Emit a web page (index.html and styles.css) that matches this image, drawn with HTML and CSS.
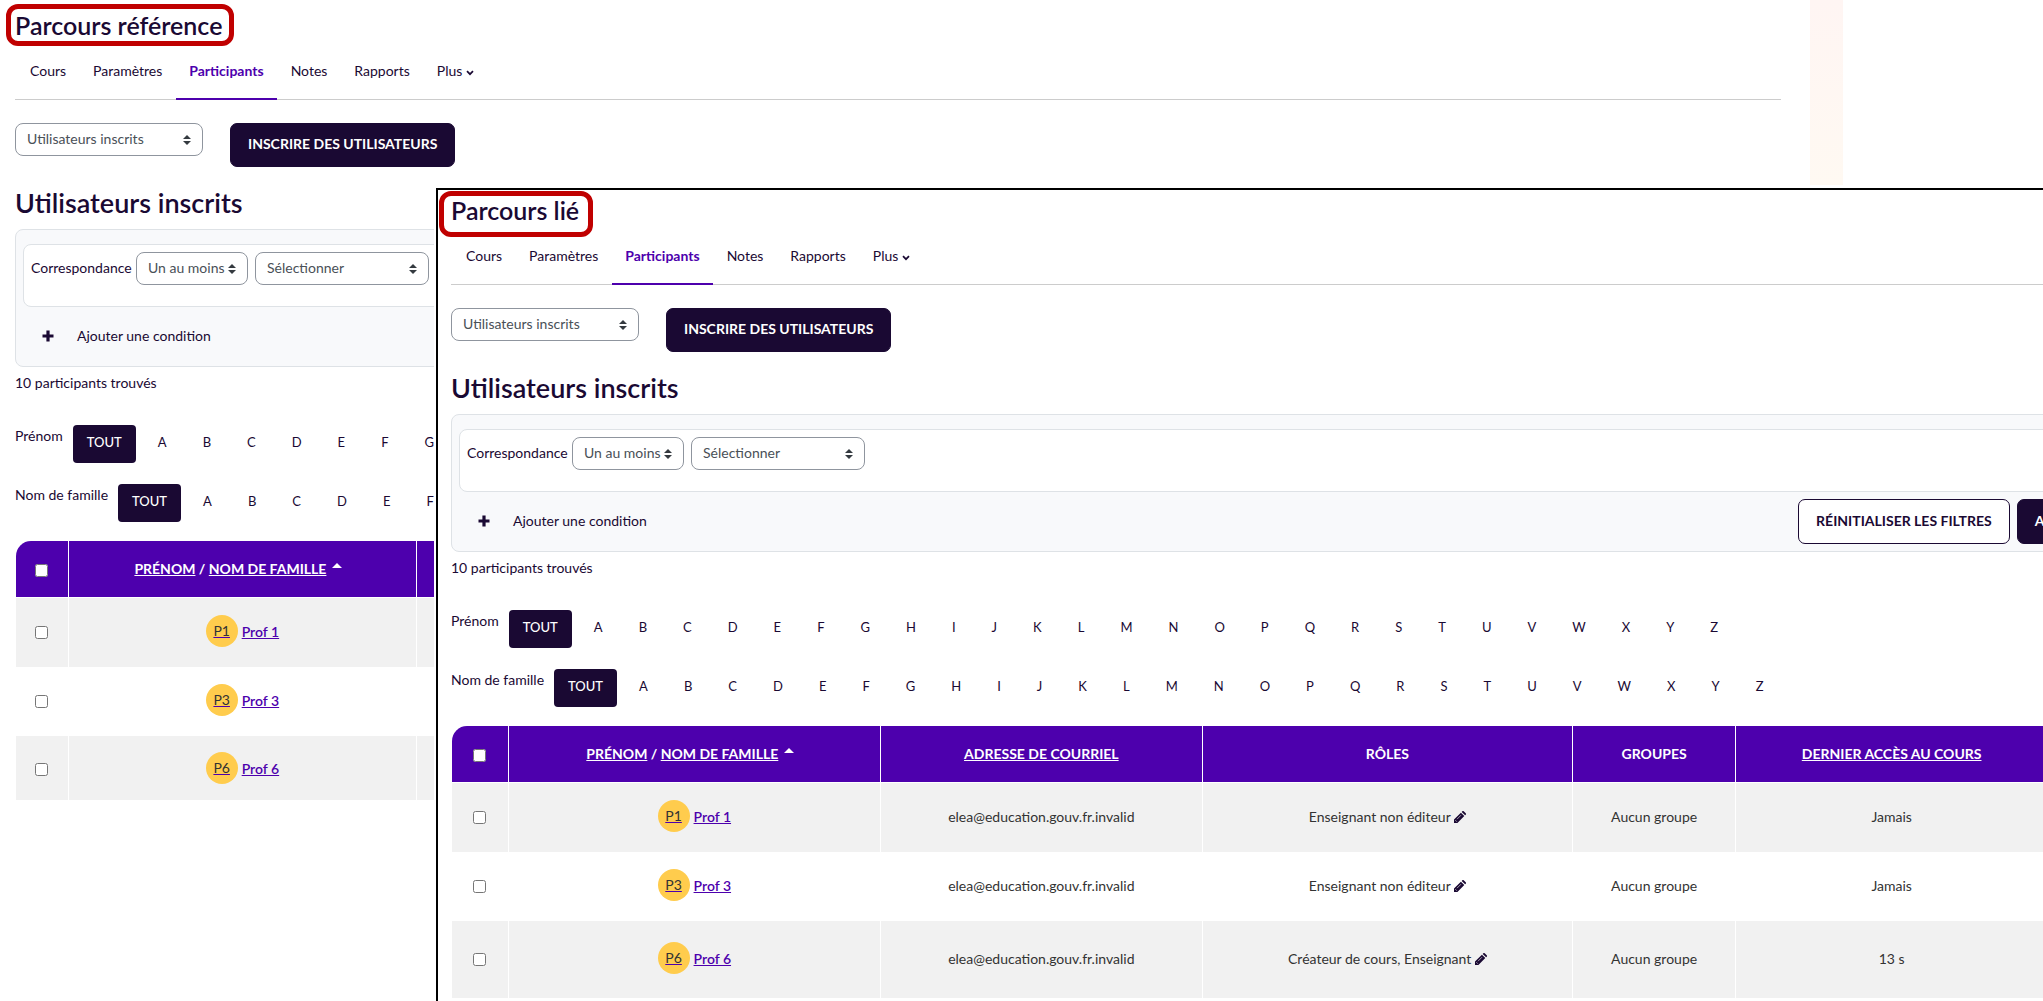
FILE: index.html
```html
<!DOCTYPE html>
<html lang="fr">
<head>
<meta charset="utf-8">
<title>Participants</title>
<link rel="stylesheet" href="styles.css">
</head>
<body>
<svg class="sprite" aria-hidden="true">
  <symbol id="i-chevron" viewBox="0 0 8 6"><path d="M1 1.2 4 4.2 7 1.2" fill="none" stroke="currentColor" stroke-width="1.7"/></symbol>
  <symbol id="i-plus" viewBox="0 0 12 12"><path d="M4.4.5h3.2v3.9h3.9v3.2H7.600v3.900H4.400V7.600H.5V4.400h3.900z" fill="currentColor"/></symbol>
  <symbol id="i-caret" viewBox="0 0 10 5"><path d="M0 5 5 0l5 5z" fill="currentColor"/></symbol>
  <symbol id="i-pencil" viewBox="0 0 12 12"><path d="M0 12V8.600L6.900 1.700l3.400 3.400L3.400 12zM7.700.9l.6-.6a1 1 0 0 1 1.400 0l2 2a1 1 0 0 1 0 1.400l-.6.6z" fill="currentColor"/><path d="M1.300 9.200l1.500 1.500M3 8.200l4-4" stroke="#fff" stroke-width=".6"/></symbol>
</svg>

<div class="desk">
  <main class="course course-reference">
    <h1 class="course-title"><span class="marked">Parcours référence</span></h1>
    <nav class="tabs">
      <a href="#" class="tab">Cours</a>
      <a href="#" class="tab">Paramètres</a>
      <a href="#" class="tab active">Participants</a>
      <a href="#" class="tab">Notes</a>
      <a href="#" class="tab">Rapports</a>
      <a href="#" class="tab">Plus <svg class="chevron"><use href="#i-chevron"/></svg></a>
    </nav>
    <div class="actions">
      <select class="select select-page" aria-label="Page des participants"><option>Utilisateurs inscrits</option></select>
      <button type="button" class="btn btn-dark">Inscrire des utilisateurs</button>
    </div>
    <h2 class="section-title">Utilisateurs inscrits</h2>
    <section class="filters">
      <div class="filter-row">
        <label for="match-a">Correspondance</label>
        <select id="match-a" class="select select-match"><option>Un au moins</option></select>
        <select class="select select-type" aria-label="Type de filtre"><option>Sélectionner</option></select>
      </div>
      <div class="filter-foot">
        <button type="button" class="add"><svg class="plus"><use href="#i-plus"/></svg>Ajouter une condition</button>
      </div>
    </section>
    <p class="count">10 participants trouvés</p>
    <div class="initials">
      <span class="initials-label">Prénom</span>
      <a href="#" class="initial all">TOUT</a><a href="#" class="initial">A</a><a href="#" class="initial">B</a><a href="#" class="initial">C</a><a href="#" class="initial">D</a><a href="#" class="initial">E</a><a href="#" class="initial">F</a><a href="#" class="initial">G</a>
    </div>
    <div class="initials">
      <span class="initials-label">Nom de famille</span>
      <a href="#" class="initial all">TOUT</a><a href="#" class="initial">A</a><a href="#" class="initial">B</a><a href="#" class="initial">C</a><a href="#" class="initial">D</a><a href="#" class="initial">E</a><a href="#" class="initial">F</a>
    </div>
    <table class="people">
      <colgroup><col class="r-check"><col class="r-name"><col></colgroup>
      <thead>
        <tr>
          <th><input type="checkbox" aria-label="Tout sélectionner"></th>
          <th><a href="#">PRÉNOM</a> / <a href="#">NOM DE FAMILLE</a><svg class="caret"><use href="#i-caret"/></svg></th>
          <th></th>
        </tr>
      </thead>
      <tbody>
        <tr><td><input type="checkbox" aria-label="Prof 1"></td><td><a href="#" class="person"><span class="avatar">P1</span><span class="person-name">Prof 1</span></a></td><td></td></tr>
        <tr><td><input type="checkbox" aria-label="Prof 3"></td><td><a href="#" class="person"><span class="avatar">P3</span><span class="person-name">Prof 3</span></a></td><td></td></tr>
        <tr class="cut"><td><input type="checkbox" aria-label="Prof 6"></td><td><a href="#" class="person"><span class="avatar">P6</span><span class="person-name">Prof 6</span></a></td><td></td></tr>
      </tbody>
    </table>
  </main>
  <aside class="drawer-edge"></aside>

  <div class="overlay">
    <main class="course">
      <h1 class="course-title"><span class="marked marked-wide">Parcours lié</span></h1>
      <nav class="tabs">
        <a href="#" class="tab">Cours</a>
        <a href="#" class="tab">Paramètres</a>
        <a href="#" class="tab active">Participants</a>
        <a href="#" class="tab">Notes</a>
        <a href="#" class="tab">Rapports</a>
        <a href="#" class="tab">Plus <svg class="chevron"><use href="#i-chevron"/></svg></a>
      </nav>
      <div class="actions">
        <select class="select select-page" aria-label="Page des participants"><option>Utilisateurs inscrits</option></select>
        <button type="button" class="btn btn-dark">Inscrire des utilisateurs</button>
      </div>
      <h2 class="section-title">Utilisateurs inscrits</h2>
      <section class="filters">
        <div class="filter-row">
          <label for="match-b">Correspondance</label>
          <select id="match-b" class="select select-match"><option>Un au moins</option></select>
          <select class="select select-type" aria-label="Type de filtre"><option>Sélectionner</option></select>
        </div>
        <div class="filter-foot">
          <button type="button" class="add"><svg class="plus"><use href="#i-plus"/></svg>Ajouter une condition</button>
          <button type="button" class="btn btn-light">Réinitialiser les filtres</button>
          <button type="button" class="btn btn-dark btn-apply">Appliquer les filtres</button>
        </div>
      </section>
      <p class="count">10 participants trouvés</p>
      <div class="initials">
        <span class="initials-label">Prénom</span>
        <a href="#" class="initial all">TOUT</a><a href="#" class="initial">A</a><a href="#" class="initial">B</a><a href="#" class="initial">C</a><a href="#" class="initial">D</a><a href="#" class="initial">E</a><a href="#" class="initial">F</a><a href="#" class="initial">G</a><a href="#" class="initial">H</a><a href="#" class="initial">I</a><a href="#" class="initial">J</a><a href="#" class="initial">K</a><a href="#" class="initial">L</a><a href="#" class="initial">M</a><a href="#" class="initial">N</a><a href="#" class="initial">O</a><a href="#" class="initial">P</a><a href="#" class="initial">Q</a><a href="#" class="initial">R</a><a href="#" class="initial">S</a><a href="#" class="initial">T</a><a href="#" class="initial">U</a><a href="#" class="initial">V</a><a href="#" class="initial">W</a><a href="#" class="initial">X</a><a href="#" class="initial">Y</a><a href="#" class="initial">Z</a>
      </div>
      <div class="initials">
        <span class="initials-label">Nom de famille</span>
        <a href="#" class="initial all">TOUT</a><a href="#" class="initial">A</a><a href="#" class="initial">B</a><a href="#" class="initial">C</a><a href="#" class="initial">D</a><a href="#" class="initial">E</a><a href="#" class="initial">F</a><a href="#" class="initial">G</a><a href="#" class="initial">H</a><a href="#" class="initial">I</a><a href="#" class="initial">J</a><a href="#" class="initial">K</a><a href="#" class="initial">L</a><a href="#" class="initial">M</a><a href="#" class="initial">N</a><a href="#" class="initial">O</a><a href="#" class="initial">P</a><a href="#" class="initial">Q</a><a href="#" class="initial">R</a><a href="#" class="initial">S</a><a href="#" class="initial">T</a><a href="#" class="initial">U</a><a href="#" class="initial">V</a><a href="#" class="initial">W</a><a href="#" class="initial">X</a><a href="#" class="initial">Y</a><a href="#" class="initial">Z</a>
      </div>
      <table class="people">
        <colgroup><col class="c-check"><col class="c-name"><col class="c-mail"><col class="c-roles"><col class="c-groups"><col class="c-access"><col></colgroup>
        <thead>
          <tr>
            <th><input type="checkbox" aria-label="Tout sélectionner"></th>
            <th><a href="#">PRÉNOM</a> / <a href="#">NOM DE FAMILLE</a><svg class="caret"><use href="#i-caret"/></svg></th>
            <th><a href="#">ADRESSE DE COURRIEL</a></th>
            <th>RÔLES</th>
            <th>GROUPES</th>
            <th><a href="#">DERNIER ACCÈS AU COURS</a></th>
            <th></th>
          </tr>
        </thead>
        <tbody>
          <tr>
            <td><input type="checkbox" aria-label="Prof 1"></td>
            <td><a href="#" class="person"><span class="avatar">P1</span><span class="person-name">Prof 1</span></a></td>
            <td>elea@education.gouv.fr.invalid</td>
            <td>Enseignant non éditeur <svg class="pencil"><use href="#i-pencil"/></svg></td>
            <td>Aucun groupe</td><td>Jamais</td><td></td>
          </tr>
          <tr>
            <td><input type="checkbox" aria-label="Prof 3"></td>
            <td><a href="#" class="person"><span class="avatar">P3</span><span class="person-name">Prof 3</span></a></td>
            <td>elea@education.gouv.fr.invalid</td>
            <td>Enseignant non éditeur <svg class="pencil"><use href="#i-pencil"/></svg></td>
            <td>Aucun groupe</td><td>Jamais</td><td></td>
          </tr>
          <tr class="tall">
            <td><input type="checkbox" aria-label="Prof 6"></td>
            <td><a href="#" class="person"><span class="avatar">P6</span><span class="person-name">Prof 6</span></a></td>
            <td>elea@education.gouv.fr.invalid</td>
            <td>Créateur de cours, Enseignant <svg class="pencil"><use href="#i-pencil"/></svg></td>
            <td>Aucun groupe</td><td>13 s</td><td></td>
          </tr>
        </tbody>
      </table>
    </main>
  </div>
</div>
</body>
</html>
```

FILE: styles.css
```css
:root {
  --ink: #1a0933;
  --purple: #4d00ad;
  --line: #dee2e6;
  --page-width: calc(100vw - 277px);
}

* { box-sizing: border-box; }

body {
  margin: 0;
  background: #fff;
  color: var(--ink);
  font: 14px/21px Lato, "Open Sans", sans-serif;
}

a { color: inherit; }
.sprite { display: none; }

/* Two course windows, the linked one lies over the reference one */
.desk {
  position: relative;
  display: flex;
  min-height: 100vh;
  overflow: hidden;
}

.overlay {
  position: absolute;
  top: 188px;
  left: 436px;
  right: 0;
  bottom: 0;
  overflow: hidden;
  padding: 0 0 0 13px;
  border: 0 solid #000;
  border-width: 2px 0 0 2px;
  background: #fff;
  box-shadow: -2px -3px 0 #fff;
}

.course { width: var(--page-width); flex: none; }
.course-reference { margin: 5px 0 0 15px; }

.drawer-edge {
  width: 33px;
  margin-left: 29px;
  background: linear-gradient(#fff5f3, #fff9f2 185px);
}

.course-title {
  margin: 0;
  font-size: 25px;
  line-height: 40px;
  font-weight: 600;
}

.marked { position: relative; }
.marked::after {
  content: "";
  position: absolute;
  inset: -6px -12px -6px -9px;
  border: 5px solid #c00000;
  border-radius: 12px;
}
.marked-wide::after { inset: -4px -14px -12px -12px; }

.tabs {
  display: flex;
  gap: 1px;
  height: 55px;
  padding-left: 2px;
  border-bottom: 1px solid #ccc;
}
.tab {
  padding: 15px 13px 0;
  text-decoration: none;
}
.tab.active {
  color: var(--purple);
  font-weight: 700;
  border-bottom: 2px solid var(--purple);
  margin-bottom: -1px;
}
.chevron { width: 8px; height: 6px; }

.actions {
  display: flex;
  align-items: flex-start;
  gap: 27px;
  margin-top: 23px;
}

.select {
  appearance: none;
  height: 33px;
  margin: 0;
  padding: 0 22px 2px 11px;
  border: 1px solid #8f959e;
  border-radius: 8px;
  color: #495057;
  font: inherit;
  background: #fff url("data:image/svg+xml,%3Csvg xmlns='http://www.w3.org/2000/svg' viewBox='0 0 4 5'%3E%3Cpath fill='%23343a40' d='M2 0L0 2h4zm0 5L0 3h4z'/%3E%3C/svg%3E") no-repeat right 11px center / 8px 10px;
}
.select-page { width: 188px; }
.select-match { width: 112px; }
.select-type { width: 174px; }

.btn {
  height: 44px;
  padding: 0 17px 3px;
  border: 1px solid var(--ink);
  border-radius: 7px;
  font: 700 14px/21px Lato, "Open Sans", sans-serif;
  text-transform: uppercase;
  white-space: nowrap;
}
.btn-dark { background: var(--ink); color: #fff; }
.btn-light { background: #fff; color: var(--ink); }

.section-title {
  margin: 18px 0 8px;
  font-size: 27px;
  line-height: 36px;
  font-weight: 600;
}

.filters {
  padding: 14px 5px 7px 7px;
  border: 1px solid var(--line);
  border-radius: 8px;
  background: #f8f9fb;
}
.filter-row {
  display: flex;
  align-items: flex-start;
  gap: 7px;
  height: 63px;
  padding: 7px;
  border: 1px solid var(--line);
  border-radius: 8px;
  background: #fff;
}
.filter-row label { flex: 0 0 98px; min-width: 0; padding-top: 5px; }
.filter-foot {
  display: flex;
  align-items: center;
  gap: 7px;
  height: 45px;
  margin: 7px 0 0;
}
.filter-foot .btn { height: 45px; }
.add {
  display: flex;
  align-items: center;
  gap: 23px;
  margin: 0 auto 0 0;
  padding: 0 19px 2px;
  border: 0;
  background: none;
  color: var(--ink);
  font: inherit;
}
.plus { width: 12px; height: 12px; }

.count { margin: 5px 0 32px; }

.initials {
  display: flex;
  gap: 8px;
  height: 38px;
  margin-bottom: 21px;
}
.initials-label { margin-right: 2px; }
.initial {
  padding: 7px 14px 0;
  border-radius: 4px;
  font-size: 13px;
  text-decoration: none;
}
.initial.all { background: var(--ink); color: #fff; font-weight: 500; }

.people {
  width: 100%;
  margin: -2px 0 0 1px;
  table-layout: fixed;
  border-collapse: separate;
  border-spacing: 0;
  text-align: center;
}
.people th, .people td {
  padding: 0;
  border-right: 1px solid #fff;
}
.people th {
  height: 57px;
  padding-bottom: 1px;
  border-bottom: 1px solid #fff;
  background: var(--purple);
  color: #fff;
  font-weight: 700;
}
.people th:first-child { border-top-left-radius: 15px; }
.people td { height: 69px; padding-bottom: 3px; color: #333; }
.people tr:nth-child(odd) td { background: #f1f1f1; }
.people .tall td { height: 77px; }
.people .cut td { height: 64px; padding-bottom: 0; }
.people input {
  width: 13px;
  height: 13px;
  margin: 0;
  vertical-align: middle;
}

.r-check { width: 3%; }
.r-name { width: 19.7%; }
.c-check { width: 3.2%; }
.c-name { width: 21.1%; }
.c-mail { width: 18.2%; }
.c-roles { width: 21%; }
.c-groups { width: 9.2%; }
.c-access { width: 17.7%; }

.person {
  display: inline-flex;
  align-items: center;
  gap: 4px;
  color: var(--purple);
}
.avatar {
  width: 32px;
  height: 32px;
  border-radius: 50%;
  background: #ffcc4d;
  color: #333;
  line-height: 32px;
}
.person-name { font-weight: 600; }
.caret { width: 10px; height: 5px; margin: 0 8px 6px 6px; }
.pencil { width: 12px; height: 12px; color: var(--ink); vertical-align: -1px; }
```
